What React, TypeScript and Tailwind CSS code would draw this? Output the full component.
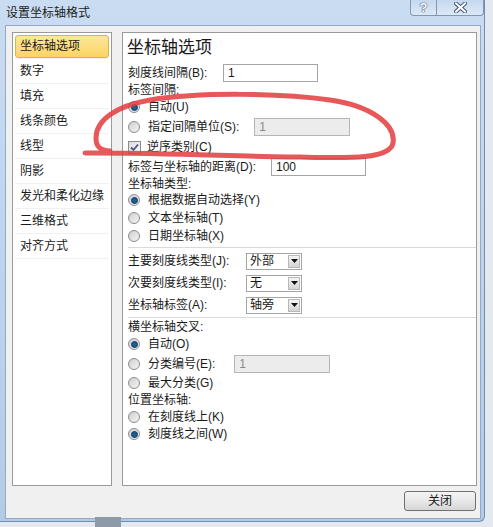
// Small Win7-style controls
const Radio = ({ checked }: { checked?: boolean }) => (
  <span className="w-[12px] h-[12px] rounded-full border border-[#8c8c8c] bg-linear-to-br from-[#cfcfcf] to-[#f5f5f5] flex items-center justify-center shrink-0">
    {checked && (
      <span className="w-[7px] h-[7px] rounded-full bg-[#1e5b8e] border border-[#0d3a63]" />
    )}
  </span>
);

const Checkbox = ({ checked }: { checked?: boolean }) => (
  <span className="w-[13px] h-[13px] border border-[#8c8c8c] bg-linear-to-br from-[#dcdcdc] to-[#fafafa] flex items-center justify-center shrink-0">
    {checked && (
      <svg width="9" height="9" viewBox="0 0 9 9">
        <path d="M1 4.5 L3.5 7 L8 1.5" fill="none" stroke="#3c5a86" strokeWidth="1.8" />
      </svg>
    )}
  </span>
);

const TextBox = ({
  value,
  disabled,
  className,
}: {
  value: string;
  disabled?: boolean;
  className: string;
}) => (
  <div
    className={`h-[18px] border flex items-center px-[4px] ${
      disabled ? 'bg-[#ececec] border-[#b5b5b5] text-[#8a8a8a]' : 'bg-white border-[#a5a5a5]'
    } ${className}`}
  >
    {value}
  </div>
);

const Select = ({ value }: { value: string }) => (
  <div className="ml-auto w-[56px] h-[17px] border border-[#a5a5a5] bg-white flex items-center justify-between pl-[3px] pr-[1px] mr-[174px]">
    <span>{value}</span>
    <span className="w-[12px] h-[13px] border border-[#b8b8b8] bg-linear-to-b from-[#f4f4f4] to-[#d4d4d4] flex items-center justify-center">
      <svg width="7" height="4" viewBox="0 0 7 4">
        <path d="M0 0 H7 L3.5 4 Z" fill="#111" />
      </svg>
    </span>
  </div>
);

const RadioRow = ({
  label,
  checked,
  h,
  children,
}: {
  label: string;
  checked?: boolean;
  h: string;
  children?: React.ReactNode;
}) => (
  <div className={`flex items-center gap-[8px] ${h}`}>
    <Radio checked={checked} />
    <span>{label}</span>
    {children}
  </div>
);

const sideItems = [
  '坐标轴选项',
  '数字',
  '填充',
  '线条颜色',
  '线型',
  '阴影',
  '发光和柔化边缘',
  '三维格式',
  '对齐方式',
];

export default function App() {
  return (
    <div className="w-[493px] h-[527px] bg-[#e4e9ef] relative overflow-hidden text-[12px] leading-[16px] text-[#1a1a1a] font-['Liberation_Sans','Noto_Sans_CJK_SC',sans-serif]">
      {/* Window frame */}
      <div className="w-[485px] h-[522px] bg-linear-to-b from-[#c9dcf1] via-[#bfd4ec] to-[#b4cbe6] border-r border-b border-[#6f8db3] rounded-br-[6px] flex flex-col">
        {/* Title bar */}
        <div className="h-[25px] flex justify-between">
          <span className="pl-[6px] pt-[5px] text-[#1b1b1b]">设置坐标轴格式</span>
          <div className="flex h-[16px]">
            <div className="w-[27px] border border-t-0 border-[#7e98ba] rounded-bl-[4px] bg-linear-to-b from-[#c6d8ee] to-[#dde8f6] flex items-center justify-center text-[13px] text-white font-bold [text-shadow:0_0_1px_#3a4f6e,0_0_1px_#3a4f6e,0_0_1px_#3a4f6e]">
              ?
            </div>
            <div className="w-[47px] border border-t-0 border-l-0 border-[#7e98ba] rounded-br-[4px] bg-linear-to-b from-[#c6d8ee] to-[#dde8f6] flex items-center justify-center">
              <svg width="13" height="11" viewBox="0 0 13 11">
                <path d="M2 1.5 L11 9.5 M11 1.5 L2 9.5" stroke="#46597a" strokeWidth="4" strokeLinecap="square" />
                <path d="M2 1.5 L11 9.5 M11 1.5 L2 9.5" stroke="#ffffff" strokeWidth="2" strokeLinecap="square" />
              </svg>
            </div>
          </div>
        </div>

        {/* Body */}
        <div className="ml-[5px] w-[476px] h-[494px] bg-[#f0f0f0] border border-[#93a9c5] flex flex-col pl-[6px] pr-[3px] pt-[6px]">
          <div className="flex gap-[10px] h-[454px]">
            {/* Left list */}
            <div className="w-[100px] bg-white border border-[#9a9a9a] px-[2px] pt-[1px] flex flex-col">
              {sideItems.map((item, i) => (
                <div key={item} className="h-[25px] flex items-center border-b border-[#f1f1f1]">
                  {i === 0 ? (
                    <div className="w-full h-[23px] rounded-[3px] border border-[#dcb44a] bg-linear-to-b from-[#fde79a] to-[#fbd463] flex items-center pl-[4px]">
                      {item}
                    </div>
                  ) : (
                    <span className="pl-[5px]">{item}</span>
                  )}
                </div>
              ))}
            </div>

            {/* Right panel */}
            <div className="w-[355px] bg-white border border-[#9a9a9a] pl-[5px] pt-[3px] flex flex-col">
              <div className="h-[24px] text-[17px] leading-[24px] -ml-[1px]">坐标轴选项</div>
              <div className="h-[19px] mt-[3px] flex items-center">
                <span className="w-[95px]">刻度线间隔(B):</span>
                <TextBox value="1" className="w-[95px]" />
              </div>
              <div className="h-[15px] flex items-center">标签间隔:</div>
              <RadioRow h="h-[20px]" label="自动(U)" checked />
              <RadioRow h="h-[20px]" label="指定间隔单位(S):">
                <TextBox value="1" disabled className="w-[96px] ml-[7px] h-[17px]" />
              </RadioRow>
              <div className="h-[20px] flex items-center gap-[6px]">
                <Checkbox checked />
                <span>逆序类别(C)</span>
              </div>
              <div className="h-[19px] flex items-center">
                <span className="w-[143px]">标签与坐标轴的距离(D):</span>
                <TextBox value="100" className="w-[95px]" />
              </div>
              <div className="h-[15px] flex items-center">坐标轴类型:</div>
              <RadioRow h="h-[18px]" label="根据数据自动选择(Y)" checked />
              <RadioRow h="h-[18px]" label="文本坐标轴(T)" />
              <RadioRow h="h-[18px]" label="日期坐标轴(X)" />
              <div className="h-[5px] flex items-center">
                <div className="h-px w-full bg-[#dadada]" />
              </div>
              <div className="h-[22px] flex items-center">
                <span>主要刻度线类型(J):</span>
                <Select value="外部" />
              </div>
              <div className="h-[22px] flex items-center">
                <span>次要刻度线类型(I):</span>
                <Select value="无" />
              </div>
              <div className="h-[22px] flex items-center">
                <span>坐标轴标签(A):</span>
                <Select value="轴旁" />
              </div>
              <div className="h-[3px] flex items-center">
                <div className="h-px w-full bg-[#dadada]" />
              </div>
              <div className="h-[16px] flex items-center">横坐标轴交叉:</div>
              <RadioRow h="h-[18px]" label="自动(O)" checked />
              <RadioRow h="h-[20px] mt-[1px]" label="分类编号(E):">
                <TextBox value="1" disabled className="w-[96px] ml-[11px]" />
              </RadioRow>
              <RadioRow h="h-[18px]" label="最大分类(G)" />
              <div className="h-[16px] flex items-center">位置坐标轴:</div>
              <RadioRow h="h-[18px]" label="在刻度线上(K)" />
              <RadioRow h="h-[16px]" label="刻度线之间(W)" checked />
            </div>
          </div>

          {/* Footer */}
          <div className="flex justify-end pt-[5px] pr-[1px]">
            <button className="w-[72px] h-[20px] rounded-[3px] border border-[#707070] bg-linear-to-b from-[#f4f4f4] via-[#e8e8e8] to-[#d6d6d6] flex items-center justify-center">
              关闭
            </button>
          </div>
        </div>
      </div>

      {/* Small taskbar stub under the dialog */}
      <div className="absolute left-[95px] top-[517px] w-[26px] h-[10px] bg-[#8e9aa8]" />

      {/* Hand-drawn red annotation */}
      <svg className="absolute left-0 top-0 pointer-events-none" width="493" height="527">
        <path
          d="M85 153 C150 152 250 157 300 157 C345 158 390 160 393 143 C396 125 372 106 330 100 C280 93 200 92 150 100 C116 106 96 120 96 138 C96 147 100 150 110 151"
          fill="none"
          stroke="#e23b3d"
          strokeOpacity="0.85"
          strokeWidth="5"
          strokeLinecap="round"
        />
      </svg>
    </div>
  );
}
